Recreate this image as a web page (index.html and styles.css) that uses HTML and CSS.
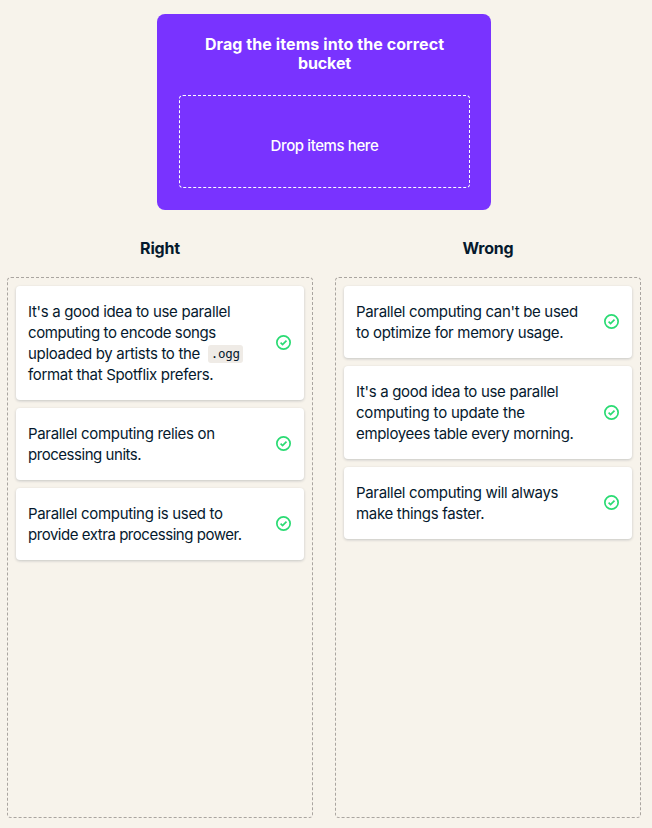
FILE: index.html
```html
<!DOCTYPE html>
<html lang="en">
<head>
<meta charset="utf-8">
<title>Drag the items into the correct bucket</title>
<link rel="stylesheet" href="styles.css">
</head>
<body>
<svg class="defs" aria-hidden="true">
  <symbol id="check" viewBox="0 0 16 16">
    <circle cx="8" cy="8" r="7.1"/>
    <path d="M4.9 8.2 7 10.2l4.2-4.2"/>
  </symbol>
</svg>
<section class="panel">
  <h1>Drag the items into the correct<br><span class="snug">bucket</span></h1>
  <div class="drop">Drop items here</div>
</section>
<main class="buckets">
  <section class="bucket">
    <h2>Right</h2>
    <div class="zone">
      <article class="card"><p>It's a good idea to use parallel<br><span class="snug">computing to encode songs</span><br>uploaded by artists to the <code>.ogg</code><br>format that Spotflix prefers.</p><svg class="icon"><use href="#check"/></svg></article>
      <article class="card"><p>Parallel computing relies on<br><span class="tight">processing units.</span></p><svg class="icon"><use href="#check"/></svg></article>
      <article class="card"><p>Parallel computing is used to<br><span class="tight">provide extra processing power.</span></p><svg class="icon"><use href="#check"/></svg></article>
    </div>
  </section>
  <section class="bucket">
    <h2>Wrong</h2>
    <div class="zone">
      <article class="card"><p>Parallel computing can't be used<br>to optimize for memory usage.</p><svg class="icon"><use href="#check"/></svg></article>
      <article class="card"><p>It's a good idea to use parallel<br><span class="loose">computing to update the</span><br>employees table every morning.</p><svg class="icon"><use href="#check"/></svg></article>
      <article class="card"><p>Parallel computing will always<br>make things faster.</p><svg class="icon"><use href="#check"/></svg></article>
    </div>
  </section>
</main>
</body>
</html>
```
FILE: styles.css
```css
* { box-sizing: border-box; }
body {
  margin: 0;
  padding: 14px 11px 10px 7px;
  height: 828px;
  display: flex;
  flex-direction: column;
  background: #f7f3eb;
  color: #05192d;
  font-family: Inter, "Liberation Sans", sans-serif;
  font-size: 15px;
  line-height: 21px;
  overflow: hidden;
}
h1, h2, p { margin: 0; }
.defs { display: none; }
.panel {
  width: 334px;
  height: 196px;
  align-self: center;
  padding: 21px 21px 22px 22px;
  border-radius: 8px;
  background: #7933ff;
  color: #fff;
  text-align: center;
}
h1 {
  height: 60px;
  font-size: 16px;
  line-height: 19px;
  font-weight: 700;
  letter-spacing: 0.08px;
  white-space: nowrap;
}
h1 .snug { letter-spacing: -0.1px; }
.drop {
  height: 93px;
  display: flex;
  align-items: center;
  justify-content: center;
  padding-top: 8px;
  border: 1px dashed #fff;
  border-radius: 4px;
  font-weight: 500;
  letter-spacing: -0.4px;
}
.buckets {
  flex: 1;
  display: flex;
  gap: 22px;
  padding-top: 28px;
}
.bucket {
  flex: none;
  width: 306px;
  display: flex;
  flex-direction: column;
}
h2 {
  height: 39px;
  font-size: 16px;
  line-height: 20px;
  font-weight: 700;
  letter-spacing: -0.2px;
  text-align: center;
}
.zone {
  flex: 1;
  display: flex;
  flex-direction: column;
  gap: 8px;
  padding: 8px;
  border: 1px dashed #aaa5a0;
  border-radius: 4px;
}
.card {
  display: flex;
  align-items: center;
  justify-content: space-between;
  padding: 15px 13px 15px 12px;
  border-radius: 4px;
  background: #fff;
  box-shadow: 0 1px 3px rgba(5, 25, 45, 0.2);
}
.card p {
  letter-spacing: -0.32px;
  white-space: nowrap;
}
.card .snug { letter-spacing: -0.4px; }
.card .tight { letter-spacing: -0.46px; }
.card .loose { letter-spacing: -0.2px; }
code {
  display: inline-block;
  height: 18px;
  margin: 2px 0 0 4px;
  padding: 0 3px;
  border-radius: 3px;
  background: #efebe6;
  font-family: "DejaVu Sans Mono", monospace;
  font-size: 12.5px;
  line-height: 18px;
  letter-spacing: -0.3px;
  vertical-align: top;
}
.icon {
  flex: none;
  width: 15px;
  height: 15px;
  margin-bottom: 1px;
  fill: none;
  stroke: #2adb73;
  stroke-width: 1.8;
}
```
